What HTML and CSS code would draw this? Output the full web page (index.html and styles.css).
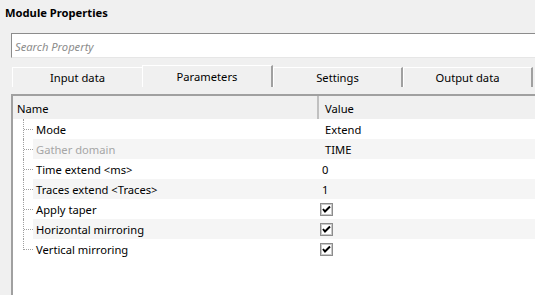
FILE: index.html
```html
<!DOCTYPE html>
<html lang="en">
<head>
  <meta charset="UTF-8" />
  <title>Module Properties</title>
  <link rel="stylesheet" href="styles.css">
</head>
<body>
  <div class="title">Module Properties</div>

  <div class="search">
    <input type="text" placeholder="Search Property" />
  </div>

  <div class="tabs">
    <div class="tab">Input data</div>
    <div class="tab active">Parameters</div>
    <div class="tab">Settings</div>
    <div class="tab">Output data</div>
  </div>

  <div class="grid">
    <div class="grid-head">
      <div class="head-name">Name</div>
      <div class="head-value">Value</div>
    </div>

    <div class="row">
      <div class="tree"></div>
      <div class="cells"><span class="name">Mode</span><span class="val">Extend</span></div>
    </div>
    <div class="row alt">
      <div class="tree"></div>
      <div class="cells"><span class="name disabled">Gather domain</span><span class="val">TIME</span></div>
    </div>
    <div class="row">
      <div class="tree"></div>
      <div class="cells"><span class="name">Time extend &lt;ms&gt;</span><span class="val num">0</span></div>
    </div>
    <div class="row alt">
      <div class="tree"></div>
      <div class="cells"><span class="name">Traces extend &lt;Traces&gt;</span><span class="val num">1</span></div>
    </div>
    <div class="row">
      <div class="tree"></div>
      <div class="cells"><span class="name">Apply taper</span><span class="val box"><svg width="13" height="13" viewBox="0 0 13 13"><rect x="0.5" y="0.5" width="12" height="12" fill="#fff" stroke="#8c8c8c"/><rect x="1.5" y="1.5" width="10" height="10" fill="none" stroke="#c8c8c8"/><path d="M3 6 L5 8.5 L10 3.5" fill="none" stroke="#000" stroke-width="2"/></svg></span></div>
    </div>
    <div class="row alt">
      <div class="tree"></div>
      <div class="cells"><span class="name">Horizontal mirroring</span><span class="val box"><svg width="13" height="13" viewBox="0 0 13 13"><rect x="0.5" y="0.5" width="12" height="12" fill="#fff" stroke="#8c8c8c"/><rect x="1.5" y="1.5" width="10" height="10" fill="none" stroke="#c8c8c8"/><path d="M3 6 L5 8.5 L10 3.5" fill="none" stroke="#000" stroke-width="2"/></svg></span></div>
    </div>
    <div class="row last">
      <div class="tree"></div>
      <div class="cells"><span class="name">Vertical mirroring</span><span class="val box"><svg width="13" height="13" viewBox="0 0 13 13"><rect x="0.5" y="0.5" width="12" height="12" fill="#fff" stroke="#8c8c8c"/><rect x="1.5" y="1.5" width="10" height="10" fill="none" stroke="#c8c8c8"/><path d="M3 6 L5 8.5 L10 3.5" fill="none" stroke="#000" stroke-width="2"/></svg></span></div>
    </div>
  </div>
</body>
</html>
```

FILE: styles.css
```css
body {
  margin: 0;
  width: 535px;
  height: 295px;
  overflow: hidden;
  background-color: #f0f0f0;
  font-family: "Segoe UI", "Noto Sans", sans-serif;
  font-size: 11.2px;
  color: #000;
}

.title {
  height: 33px;
  padding: 2px 0 0 5px;
  line-height: 22px;
  font-weight: bold;
  box-sizing: border-box;
}

.search {
  margin-left: 11px;
  width: 540px;
  height: 25px;
  box-sizing: border-box;
  background-color: #fff;
  border-top: 1px solid #8c8c8c;
  border-left: 1px solid #8c8c8c;
  border-bottom: 1px solid #e6e6e6;
}

.search input {
  width: 100%;
  height: 100%;
  box-sizing: border-box;
  border: none;
  outline: none;
  padding: 1px 3px 0;
  font-family: inherit;
  font-size: 11.2px;
  background: transparent;
}

.search input::placeholder {
  color: #8c8c8c;
  font-style: italic;
}

.tabs {
  display: flex;
  margin-top: 7px;
  margin-left: 12px;
  height: 22px;
}

.tab {
  width: 130px;
  height: 20px;
  margin-top: 2px;
  padding-top: 1px;
  box-sizing: border-box;
  border-top: 1px solid #fff;
  border-left: 1px solid #fff;
  border-right: 2px solid #a0a0a0;
  text-align: center;
  line-height: 18px;
}

.tab.active {
  width: 131px;
  height: 22px;
  margin-top: 0;
  line-height: 19px;
}

.tab:first-child {
  border-right: none;
}

.grid {
  margin-top: 7px;
  margin-left: 11px;
  width: 540px;
  height: 201px;
  box-sizing: border-box;
  background-color: #fff;
  border-top: 2px solid #a0a0a0;
  border-left: 2px solid #a0a0a0;
}

.grid-head {
  display: flex;
  height: 23px;
  padding-top: 2px;
  box-sizing: border-box;
  line-height: 21px;
  background-color: #f0f0f0;
}

.head-name {
  width: 306px;
  margin-top: -2px;
  padding: 2px 0 0 4px;
  box-sizing: border-box;
  border-right: 2px solid #c0c0c0;
}

.head-value {
  padding-left: 6px;
}

.row {
  display: flex;
  height: 20px;
}

.tree {
  width: 20px;
  position: relative;
}

.tree::before {
  content: "";
  position: absolute;
  left: 10px;
  top: 0;
  height: 20px;
  border-left: 1px dotted #a0a0a0;
}

.tree::after {
  content: "";
  position: absolute;
  left: 11px;
  top: 10px;
  width: 9px;
  border-top: 1px dotted #a0a0a0;
}

.row.last .tree::before {
  height: 11px;
}

.cells {
  flex: 1;
  display: grid;
  grid-template-columns: 286px 1fr;
  align-items: center;
  padding-top: 2px;
  box-sizing: border-box;
  line-height: 18px;
}

.row.alt .cells {
  background-color: #f5f5f5;
}

.name {
  padding-left: 3px;
}

.disabled {
  color: #a6a6a6;
}

.val {
  padding-left: 6px;
}

.val.num {
  padding-left: 3px;
}

.val.box {
  padding-left: 1px;
  margin-top: -2px;
  height: 13px;
  line-height: 0;
}
```
